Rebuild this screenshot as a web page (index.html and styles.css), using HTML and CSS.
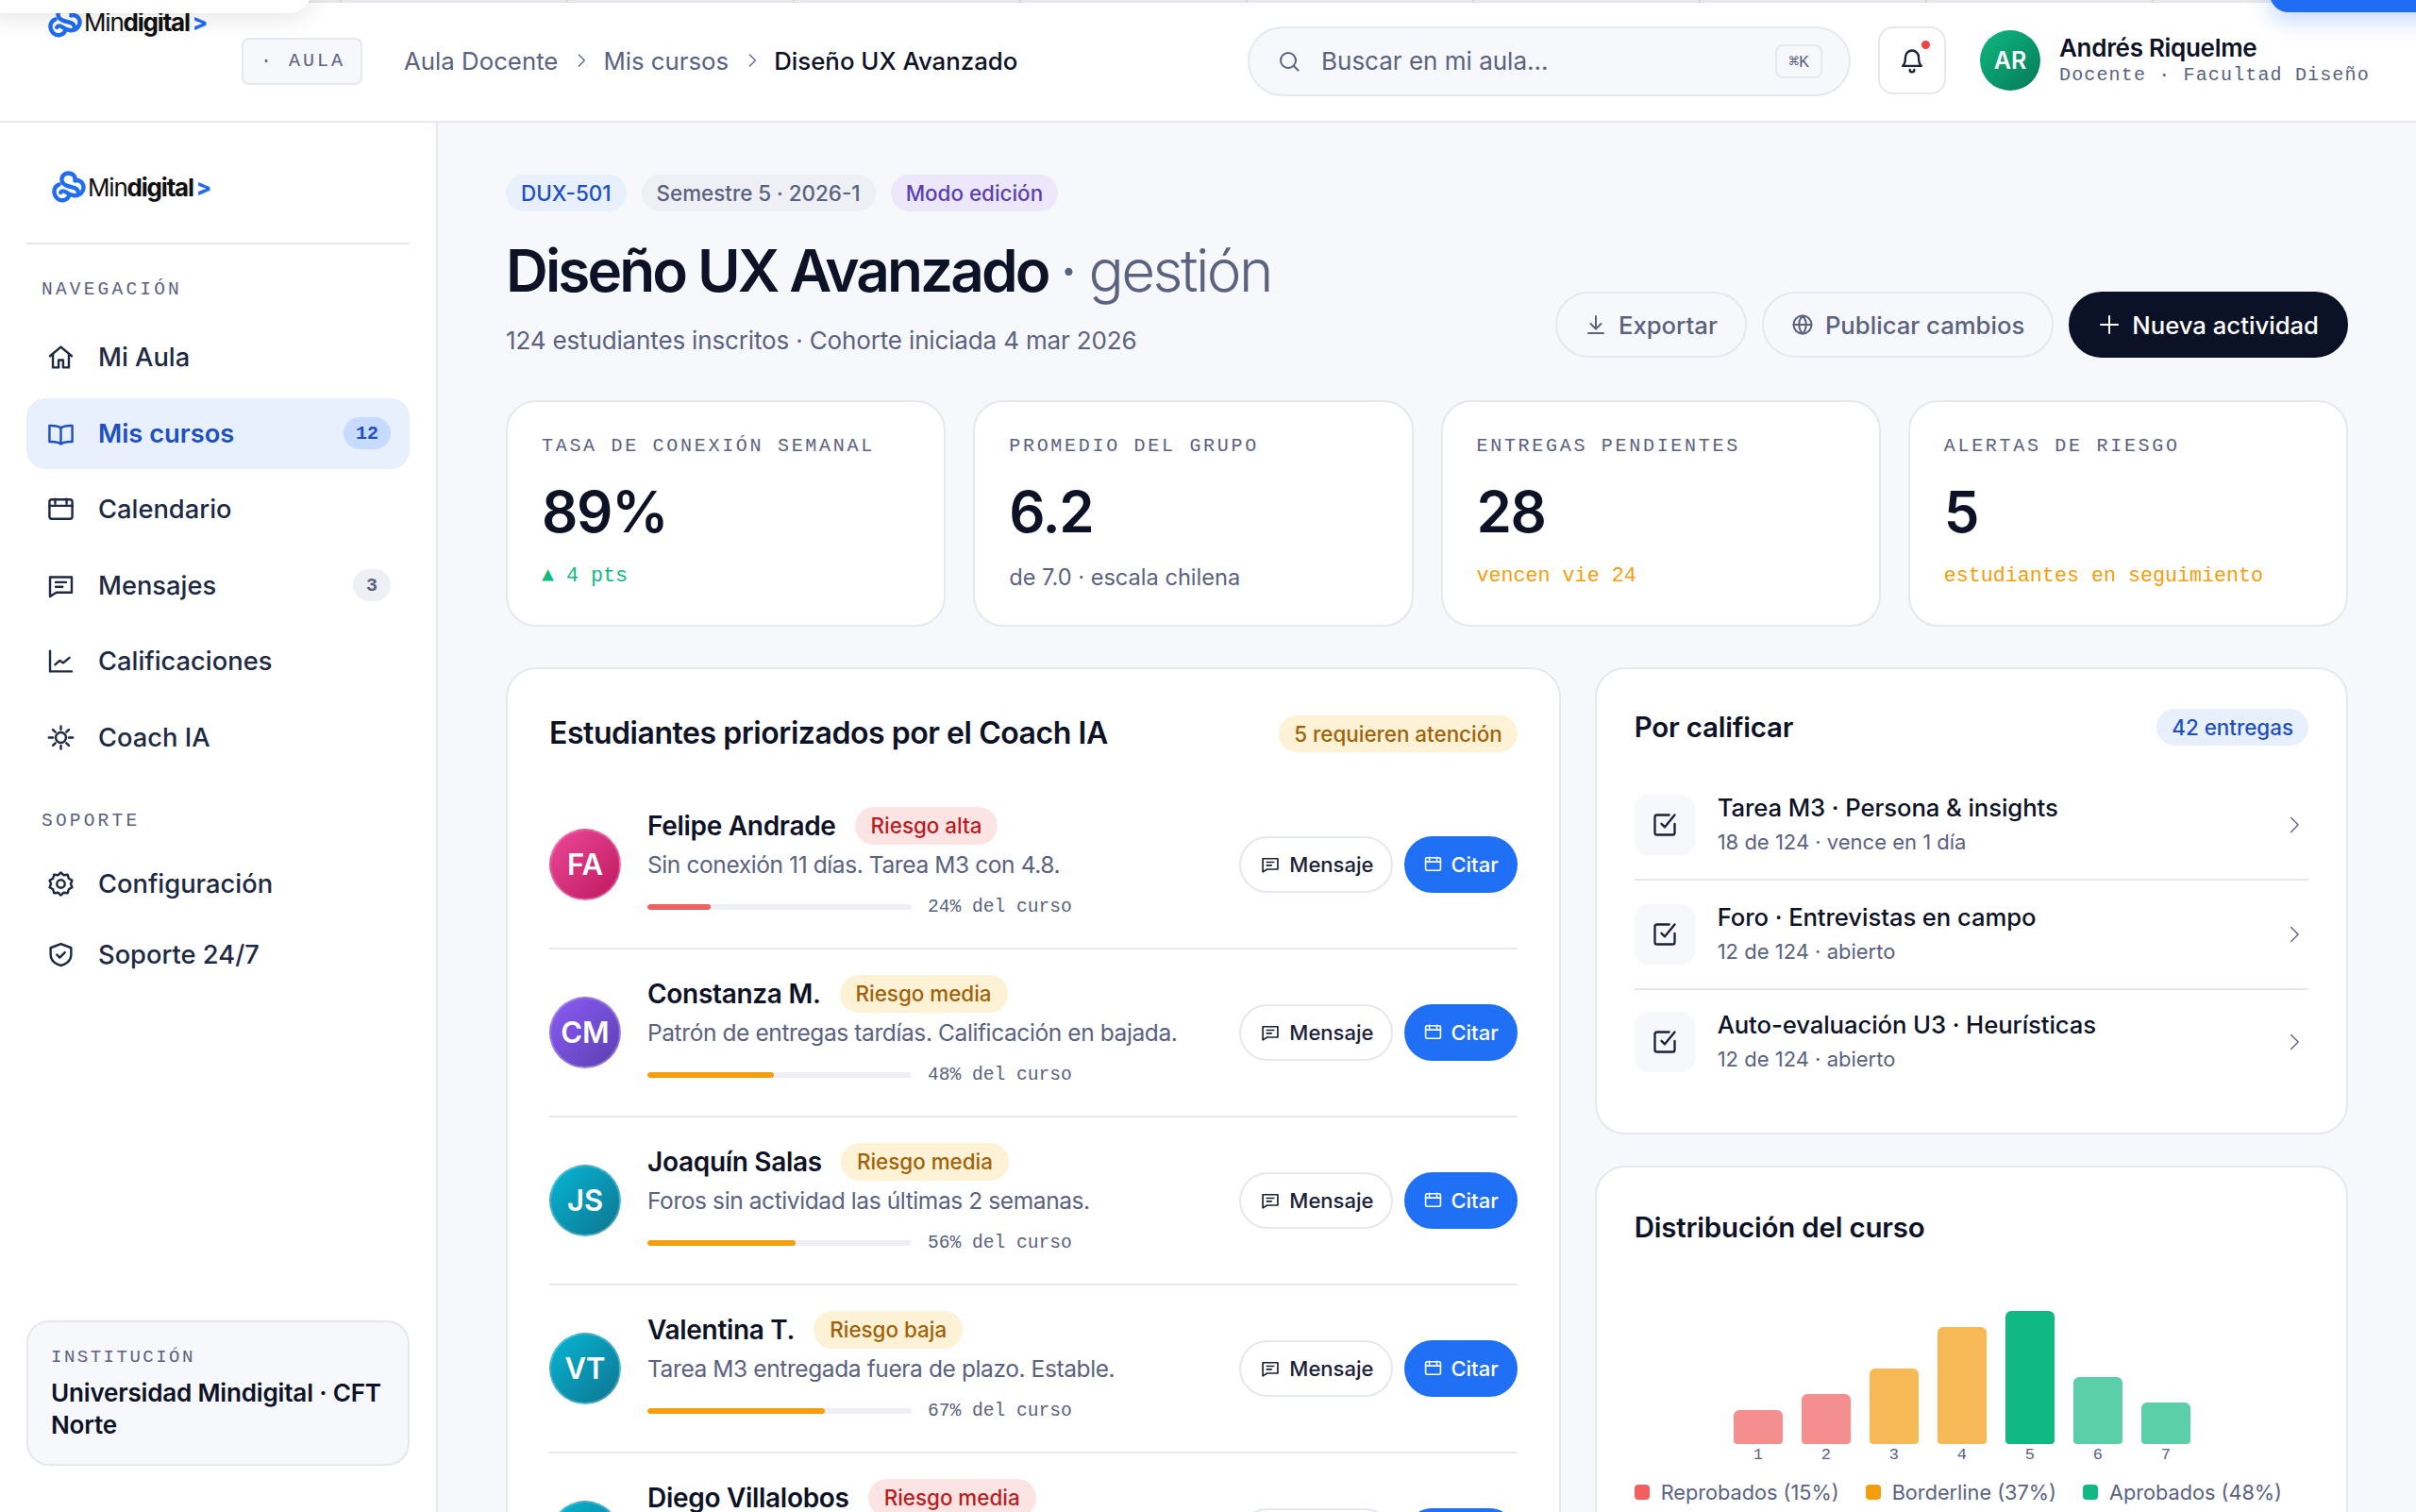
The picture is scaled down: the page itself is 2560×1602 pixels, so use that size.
FILE: index.html
```html
<!DOCTYPE html>
<html lang="es">
<head>
<meta charset="utf-8">
<title>Diseño UX Avanzado</title>
<link rel="stylesheet" href="styles.css">
</head>
<body>
<svg class="sprite" width="0" height="0">
  <defs>
    <symbol id="i-mark" viewBox="0 0 36 34"><g fill="none" stroke="currentColor" stroke-width="4.400" stroke-linecap="round"><path d="M24.500 10.500C25.500 6 22 2.500 17.500 2.500 13 2.500 10 6 10.500 10 11 14 14 15.500 18 16.500l6 1.700c3.500 1 4.800 4.600 3.200 7.300"/><path d="M7.500 14.500C4 16 2.200 19.500 2.500 23c.4 5 4.500 8.700 9 8.200 3.500-.4 5.700-2.500 6.700-5"/><path d="M26.500 10c4.500.2 7.300 4.200 7 8.200-.4 5-5 8.500-9.800 8-3-.3-6.500-2-8.500-3.500-2.500-1.800-5-1.700-6 .2"/></g></symbol>
    <symbol id="i-home" viewBox="0 0 24 24"><path d="M2.500 11 12 3l9.500 8"/><path d="M5 9.500V21h5v-6.500h4V21h5V9.500"/></symbol>
    <symbol id="i-book" viewBox="0 0 24 24"><path d="M12 7c-2-1.600-5-2.200-10-2v14c5-.2 8 .4 10 2 2-1.600 5-2.200 10-2V5c-5-.2-8 .4-10 2Z"/><path d="M12 7v14"/></symbol>
    <symbol id="i-cal" viewBox="0 0 24 24"><rect x="2" y="3.500" width="20" height="17" rx="2"/><path d="M2 9h20M7 3v4M17 3v4"/></symbol>
    <symbol id="i-msg" viewBox="0 0 24 24"><path d="M2.500 4.500h19V18H8l-5.500 3.500Z" stroke-linejoin="round"/><path d="M7.500 9h9M7.500 13h6"/></symbol>
    <symbol id="i-chart" viewBox="0 0 24 24"><path d="M2.500 3v18h19"/><path d="m7 15 4-3.500 3 2 5.500-4.500"/></symbol>
    <symbol id="i-sun" viewBox="0 0 24 24"><circle cx="12" cy="12" r="4.500"/><path d="M12 2v3M12 19v3M1.500 12h3.500M19 12h3.500M5 5l2.200 2.200M16.800 16.800 19 19M5 19l2.200-2.200M16.800 7.200 19 5"/></symbol>
    <symbol id="i-gear" viewBox="0 0 24 24"><path d="m12 2 2.500 2.400 3.500-.5.900 3.400 3 1.700-1.300 3 1.300 3-3 1.700-.9 3.400-3.500-.5L12 22l-2.500-2.400-3.500.5-.9-3.400-3-1.700 1.300-3-1.300-3 3-1.700.9-3.400 3.500.5Z"/><circle cx="12" cy="12" r="3.500"/></symbol>
    <symbol id="i-shield" viewBox="0 0 24 24"><path d="M12 2.500 21 6v6c0 5-4 8-9 9.500C7 20 3 17 3 12V6Z"/><path d="m8.500 12 2.500 2.500 4.500-4.500"/></symbol>
    <symbol id="i-search" viewBox="0 0 24 24"><circle cx="11" cy="11" r="8"/><path d="m17 17 4.500 4.500"/></symbol>
    <symbol id="i-bell" viewBox="0 0 24 24"><path d="M6 9a6 6 0 0 1 12 0c0 6 2.500 8 2.500 8h-17S6 15 6 9Z"/><path d="M10 20.500a2 2 0 0 0 4 0"/></symbol>
    <symbol id="i-down" viewBox="0 0 24 24"><path d="M12 3v13M6.500 11l5.500 5.500 5.500-5.500M4 21h16"/></symbol>
    <symbol id="i-globe" viewBox="0 0 24 24"><circle cx="12" cy="12" r="9.500"/><path d="M2.500 12h19M12 2.500c-5 5.500-5 13.500 0 19M12 2.500c5 5.500 5 13.500 0 19"/></symbol>
    <symbol id="i-plus" viewBox="0 0 24 24"><path d="M12 3v18M3 12h18"/></symbol>
    <symbol id="i-check" viewBox="0 0 24 24"><path d="M21 11v8a2 2 0 0 1-2 2H5a2 2 0 0 1-2-2V5a2 2 0 0 1 2-2h11"/><path d="m9 11 3 3 9-11"/></symbol>
    <symbol id="i-chev" viewBox="0 0 24 24"><path d="m8 3 9 9-9 9"/></symbol>
  </defs>
</svg>

<div class="app">
  <header class="topbar">
    <div class="logo logo-top">
      <svg class="logo-mark"><use href="#i-mark"/></svg>
      <span class="logo-text">Min<b>digital</b><i>&gt;</i></span>
    </div>
    <span class="aula-chip">· AULA</span>
    <nav class="crumbs">
      <span>Aula Docente</span>
      <svg class="ic crumb-sep"><use href="#i-chev"/></svg>
      <span>Mis cursos</span>
      <svg class="ic crumb-sep"><use href="#i-chev"/></svg>
      <span class="crumb-now">Diseño UX Avanzado</span>
    </nav>
    <div class="search">
      <svg class="ic search-ic"><use href="#i-search"/></svg>
      <span class="search-text">Buscar en mi aula...</span>
      <kbd class="kbd">⌘K</kbd>
    </div>
    <button class="bell"><svg class="ic bell-ic"><use href="#i-bell"/></svg><span class="bell-dot"></span></button>
    <div class="user">
      <span class="avatar-sm">AR</span>
      <div class="user-info">
        <div class="user-name">Andrés Riquelme</div>
        <div class="user-role">Docente · Facultad Diseño</div>
      </div>
    </div>
  </header>

  <aside class="sidebar">
    <div class="side-logo">
      <div class="logo">
        <svg class="logo-mark"><use href="#i-mark"/></svg>
        <span class="logo-text">Min<b>digital</b><i>&gt;</i></span>
      </div>
    </div>
    <div class="nav-label">NAVEGACIÓN</div>
    <nav class="nav">
      <a class="nav-item"><svg class="ic nav-ic"><use href="#i-home"/></svg>Mi Aula</a>
      <a class="nav-item is-active"><svg class="ic nav-ic"><use href="#i-book"/></svg>Mis cursos<span class="nav-badge nav-badge-blue">12</span></a>
      <a class="nav-item"><svg class="ic nav-ic"><use href="#i-cal"/></svg>Calendario</a>
      <a class="nav-item"><svg class="ic nav-ic"><use href="#i-msg"/></svg>Mensajes<span class="nav-badge">3</span></a>
      <a class="nav-item"><svg class="ic nav-ic"><use href="#i-chart"/></svg>Calificaciones</a>
      <a class="nav-item"><svg class="ic nav-ic"><use href="#i-sun"/></svg>Coach IA</a>
    </nav>
    <div class="nav-label nav-label-2">SOPORTE</div>
    <nav class="nav nav-tight">
      <a class="nav-item"><svg class="ic nav-ic"><use href="#i-gear"/></svg>Configuración</a>
      <a class="nav-item"><svg class="ic nav-ic"><use href="#i-shield"/></svg>Soporte 24/7</a>
    </nav>
    <div class="inst">
      <div class="inst-label">INSTITUCIÓN</div>
      <div class="inst-name">Universidad Mindigital · CFT Norte</div>
    </div>
  </aside>

  <main class="main">
    <section class="page-head">
      <div>
        <div class="chips">
          <span class="chip chip-blue">DUX-501</span>
          <span class="chip chip-grey">Semestre 5 · 2026-1</span>
          <span class="chip chip-violet">Modo edición</span>
        </div>
        <h1 class="title">Diseño UX Avanzado <span class="title-light"><span class="title-dot">·</span> gestión</span></h1>
        <p class="subtitle">124 estudiantes inscritos · Cohorte iniciada 4 mar 2026</p>
      </div>
      <div class="head-actions">
        <button class="btn"><svg class="ic btn-ic"><use href="#i-down"/></svg>Exportar</button>
        <button class="btn"><svg class="ic btn-ic"><use href="#i-globe"/></svg>Publicar cambios</button>
        <button class="btn btn-dark"><svg class="ic btn-ic"><use href="#i-plus"/></svg>Nueva actividad</button>
      </div>
    </section>

    <section class="kpis">
      <article class="kpi">
        <div class="kpi-label">TASA DE CONEXIÓN SEMANAL</div>
        <div class="kpi-value">89%</div>
        <div class="kpi-note note-green">▲ 4 pts</div>
      </article>
      <article class="kpi">
        <div class="kpi-label">PROMEDIO DEL GRUPO</div>
        <div class="kpi-value">6.2</div>
        <div class="kpi-note note-sans">de 7.0 · escala chilena</div>
      </article>
      <article class="kpi">
        <div class="kpi-label">ENTREGAS PENDIENTES</div>
        <div class="kpi-value">28</div>
        <div class="kpi-note note-amber">vencen vie 24</div>
      </article>
      <article class="kpi">
        <div class="kpi-label">ALERTAS DE RIESGO</div>
        <div class="kpi-value">5</div>
        <div class="kpi-note note-amber">estudiantes en seguimiento</div>
      </article>
    </section>

    <section class="columns">
      <article class="panel panel-students">
        <div class="panel-head students-head">
          <h2 class="panel-title">Estudiantes priorizados por el Coach IA</h2>
          <span class="chip chip-amber">5 requieren atención</span>
        </div>

        <div class="student">
          <span class="avatar av-pink">FA</span>
          <div class="student-body">
            <div class="student-top"><span class="student-name">Felipe Andrade</span><span class="risk risk-red">Riesgo alta</span></div>
            <div class="student-desc">Sin conexión 11 días. Tarea M3 con 4.8.</div>
            <div class="progress-row"><div class="track"><div class="fill fill-red" style="width:24%"></div></div><span class="progress-text">24% del curso</span></div>
          </div>
          <div class="student-actions">
            <button class="mini"><svg class="ic mini-ic"><use href="#i-msg"/></svg>Mensaje</button>
            <button class="mini mini-blue"><svg class="ic mini-ic"><use href="#i-cal"/></svg>Citar</button>
          </div>
        </div>

        <div class="student">
          <span class="avatar av-violet">CM</span>
          <div class="student-body">
            <div class="student-top"><span class="student-name">Constanza M.</span><span class="risk risk-amber">Riesgo media</span></div>
            <div class="student-desc">Patrón de entregas tardías. Calificación en bajada.</div>
            <div class="progress-row"><div class="track"><div class="fill fill-amber" style="width:48%"></div></div><span class="progress-text">48% del curso</span></div>
          </div>
          <div class="student-actions">
            <button class="mini"><svg class="ic mini-ic"><use href="#i-msg"/></svg>Mensaje</button>
            <button class="mini mini-blue"><svg class="ic mini-ic"><use href="#i-cal"/></svg>Citar</button>
          </div>
        </div>

        <div class="student">
          <span class="avatar av-teal">JS</span>
          <div class="student-body">
            <div class="student-top"><span class="student-name">Joaquín Salas</span><span class="risk risk-amber">Riesgo media</span></div>
            <div class="student-desc">Foros sin actividad las últimas 2 semanas.</div>
            <div class="progress-row"><div class="track"><div class="fill fill-amber" style="width:56%"></div></div><span class="progress-text">56% del curso</span></div>
          </div>
          <div class="student-actions">
            <button class="mini"><svg class="ic mini-ic"><use href="#i-msg"/></svg>Mensaje</button>
            <button class="mini mini-blue"><svg class="ic mini-ic"><use href="#i-cal"/></svg>Citar</button>
          </div>
        </div>

        <div class="student">
          <span class="avatar av-teal">VT</span>
          <div class="student-body">
            <div class="student-top"><span class="student-name">Valentina T.</span><span class="risk risk-amber">Riesgo baja</span></div>
            <div class="student-desc">Tarea M3 entregada fuera de plazo. Estable.</div>
            <div class="progress-row"><div class="track"><div class="fill fill-amber" style="width:67%"></div></div><span class="progress-text">67% del curso</span></div>
          </div>
          <div class="student-actions">
            <button class="mini"><svg class="ic mini-ic"><use href="#i-msg"/></svg>Mensaje</button>
            <button class="mini mini-blue"><svg class="ic mini-ic"><use href="#i-cal"/></svg>Citar</button>
          </div>
        </div>

        <div class="student">
          <span class="avatar av-teal">DV</span>
          <div class="student-body">
            <div class="student-top"><span class="student-name">Diego Villalobos</span><span class="risk risk-red">Riesgo media</span></div>
            <div class="student-desc">Sin entregas en las últimas semanas.</div>
            <div class="progress-row"><div class="track"><div class="fill fill-amber" style="width:50%"></div></div><span class="progress-text">50% del curso</span></div>
          </div>
          <div class="student-actions">
            <button class="mini"><svg class="ic mini-ic"><use href="#i-msg"/></svg>Mensaje</button>
            <button class="mini mini-blue"><svg class="ic mini-ic"><use href="#i-cal"/></svg>Citar</button>
          </div>
        </div>
      </article>

      <div class="side-col">
        <article class="panel panel-grade">
          <div class="panel-head grade-head">
            <h2 class="panel-title panel-title-sm">Por calificar</h2>
            <span class="chip chip-blue">42 entregas</span>
          </div>
          <div class="task">
            <span class="task-box"><svg class="ic task-ic"><use href="#i-check"/></svg></span>
            <div class="task-body"><div class="task-title">Tarea M3 · Persona &amp; insights</div><div class="task-sub">18 de 124 · vence en 1 día</div></div>
            <svg class="ic task-chev"><use href="#i-chev"/></svg>
          </div>
          <div class="task">
            <span class="task-box"><svg class="ic task-ic"><use href="#i-check"/></svg></span>
            <div class="task-body"><div class="task-title">Foro · Entrevistas en campo</div><div class="task-sub">12 de 124 · abierto</div></div>
            <svg class="ic task-chev"><use href="#i-chev"/></svg>
          </div>
          <div class="task">
            <span class="task-box"><svg class="ic task-ic"><use href="#i-check"/></svg></span>
            <div class="task-body"><div class="task-title">Auto-evaluación U3 · Heurísticas</div><div class="task-sub">12 de 124 · abierto</div></div>
            <svg class="ic task-chev"><use href="#i-chev"/></svg>
          </div>
        </article>

        <article class="panel panel-dist">
          <h2 class="panel-title panel-title-sm">Distribución del curso</h2>
          <div class="chart">
            <div class="bar-col"><div class="bar bar-red" style="height:36px"></div><span class="bar-label">1</span></div>
            <div class="bar-col"><div class="bar bar-red" style="height:53px"></div><span class="bar-label">2</span></div>
            <div class="bar-col"><div class="bar bar-amber" style="height:80px"></div><span class="bar-label">3</span></div>
            <div class="bar-col"><div class="bar bar-amber" style="height:124px"></div><span class="bar-label">4</span></div>
            <div class="bar-col"><div class="bar bar-green" style="height:141px"></div><span class="bar-label">5</span></div>
            <div class="bar-col"><div class="bar bar-mint" style="height:71px"></div><span class="bar-label">6</span></div>
            <div class="bar-col"><div class="bar bar-mint" style="height:44px"></div><span class="bar-label">7</span></div>
          </div>
          <div class="legend">
            <span class="legend-item"><i class="swatch sw-red"></i>Reprobados (15%)</span>
            <span class="legend-item"><i class="swatch sw-amber"></i>Borderline (37%)</span>
            <span class="legend-item"><i class="swatch sw-green"></i>Aprobados (48%)</span>
          </div>
        </article>
      </div>
    </section>
  </main>
</div>

<div class="strip"></div>
<div class="float-white"></div>
<div class="float-blue"></div>
</body>
</html>
```
FILE: styles.css
```css
* { box-sizing: border-box; }
html, body { margin: 0; height: 1602px; overflow: hidden; }
body {
  font-family: "Inter", "Liberation Sans", sans-serif;
  color: #0d1226;
  background: #f6f8fb;
  position: relative;
}
button { font-family: inherit; }
.sprite { position: absolute; }
.ic {
  fill: none;
  stroke: currentColor;
  stroke-width: 2;
  stroke-linecap: round;
  stroke-linejoin: round;
  flex: none;
}

.app {
  display: grid;
  grid-template-columns: 464px minmax(0, 1fr);
  grid-template-rows: 130px 1472px;
  height: 1602px;
}

/* overlays at the top of the frame */
.strip {
  position: absolute; left: 0; top: 0; width: 100%; height: 3px;
  background: repeating-linear-gradient(90deg, #e7e8ec 0 120px, #d9dae0 120px 122px, #e7e8ec 122px 240px);
}
.float-white {
  position: absolute; left: -20px; top: -20px; width: 350px; height: 34px;
  background: #fff;
  border-radius: 0 0 24px 24px;
  box-shadow: 0 6px 24px rgba(15, 23, 42, .10);
}
.float-blue {
  position: absolute; left: 2405px; top: -20px; width: 200px; height: 33px;
  background: #1f6cf5;
  border-radius: 0 0 20px 20px;
  box-shadow: 0 8px 24px rgba(31, 108, 245, .28);
}

/* top bar */
.topbar {
  grid-column: 1 / 3;
  display: flex;
  align-items: center;
  background: #fff;
  border-bottom: 2px solid #e6e8f0;
  padding: 0 0 0 51px;
}
.logo { display: flex; align-items: center; gap: 2px; height: 34px; }
.logo-top { align-self: flex-start; margin-top: 6px; width: 205px; }
.logo-mark { width: 36px; height: 34px; color: #1f6cf5; flex: none; }
.logo-text { font-family: "Inter", sans-serif; font-size: 26px; font-weight: 400; letter-spacing: -1.200px; color: #111; display: flex; align-items: center; }
.logo-text b { font-weight: 700; }
.logo-text i { font-style: normal; font-weight: 800; font-size: 24px; color: #1f6cf5; margin-left: 3px; letter-spacing: 0; }

.aula-chip {
  width: 128px; height: 50px;
  margin-top: 1px;
  display: flex; align-items: center;
  padding-left: 18px;
  white-space: pre;
  font-family: "Liberation Mono", monospace;
  font-size: 20px;
  letter-spacing: 3px;
  color: #5a6280;
  background: #f6f8fb;
  border: 2px solid #e6e8f0;
  border-radius: 8px;
}
.crumbs { display: flex; align-items: center; margin-left: 44px; font-size: 25.800px; color: #5a6280; width: 894px; }
.crumb-sep { width: 16px; height: 16px; margin: 0 15px 0 17px; stroke-width: 1.800; }
.crumb-now { color: #0d1226; font-weight: 500; }

.search {
  width: 639px; height: 74px;
  margin-top: 1px;
  display: flex; align-items: center;
  padding: 0 28px 0 30px;
  background: #f6f8fb;
  border: 2px solid #e6e8f0;
  border-radius: 37px;
  color: #5a6280;
}
.search-ic { width: 24px; height: 24px; margin-right: 22px; }
.search-text { font-size: 26px; flex: 1; }
.kbd {
  width: 50px; height: 36px;
  display: flex; align-items: center; justify-content: center;
  font-family: "Liberation Mono", monospace;
  font-size: 18px;
  color: #5a6280;
  background: #f6f8fb;
  border: 2px solid #e6e8f0;
  border-radius: 8px;
}
.bell {
  position: relative;
  width: 72px; height: 72px;
  margin-left: 29px;
  display: flex; align-items: center; justify-content: center;
  background: #fff;
  border: 2px solid #e6e8f0;
  border-radius: 16px;
  color: #1a2138;
  padding: 0;
}
.bell-ic { width: 28px; height: 28px; }
.bell-dot {
  position: absolute; right: 15px; top: 13px;
  width: 9px; height: 9px; border-radius: 50%;
  background: #ef4444;
}
.user { display: flex; align-items: center; margin-left: 36px; gap: 20px; }
.avatar-sm {
  width: 64px; height: 64px; border-radius: 50%;
  display: flex; align-items: center; justify-content: center;
  background: linear-gradient(135deg, #10b981, #047857);
  color: #fff; font-size: 25px; font-weight: 600;
}
.user-name { font-size: 26px; font-weight: 600; line-height: 32px; letter-spacing: -.3px; }
.user-role {
  font-family: "Liberation Mono", monospace;
  font-size: 20px; letter-spacing: 1.150px; line-height: 26px;
  color: #5a6280;
  white-space: nowrap;
}

/* sidebar */
.sidebar {
  display: flex; flex-direction: column;
  background: #fff;
  border-right: 2px solid #e6e8f0;
  padding: 0 28px 49px;
}
.side-logo {
  height: 129px;
  display: flex; align-items: center;
  padding-left: 27px;
  padding-top: 9px;
  border-bottom: 2px solid #e6e8f0;
  flex: none;
}
.nav-label {
  font-family: "Liberation Mono", monospace;
  font-size: 19.500px; letter-spacing: 3.200px;
  color: #5a6280;
  padding-left: 16px;
  margin-top: 36px;
  line-height: 24px;
}
.nav-label-2 { margin-top: 39px; }
.nav { display: flex; flex-direction: column; gap: 5.600px; margin-top: 22px; }
.nav-tight { gap: 0; margin-top: 17px; }
.nav-item {
  height: 75px;
  display: flex; align-items: center;
  padding: 0 20px 0 22px;
  font-size: 27.300px; font-weight: 500;
  color: #1e2a44;
  border-radius: 20px;
}
.nav-ic { width: 29px; height: 29px; margin-right: 25px; }
.nav-item.is-active { background: #e8f0fe; color: #1d4fc4; font-weight: 600; }
.nav-badge {
  margin-left: auto;
  min-width: 40px; height: 34px; padding: 0 13px;
  display: flex; align-items: center; justify-content: center;
  border-radius: 17px;
  background: #eef0f5;
  color: #5a6280;
  font-family: "Liberation Mono", monospace;
  font-size: 20px; font-weight: 700;
}
.nav-badge-blue { background: #c7dbfe; color: #1d4fc4; }
.inst {
  margin-top: auto;
  padding: 25px 14px 24px 24px;
  background: #f6f8fb;
  border: 2px solid #e6e8f0;
  border-radius: 24px;
}
.inst-label {
  font-family: "Liberation Mono", monospace;
  font-size: 19px; letter-spacing: 2.500px; line-height: 24px;
  color: #5a6280;
}
.inst-name { margin-top: 9px; font-size: 26.100px; font-weight: 600; line-height: 34px; letter-spacing: -.2px; }

/* main */
.main { padding: 55px 72px 0; background: #f6f8fb; overflow: hidden; min-width: 0; }
.page-head { display: flex; justify-content: space-between; align-items: flex-end; }
.chips { display: flex; gap: 16px; }
.chip {
  height: 39px; padding: 0 16px;
  display: inline-flex; align-items: center;
  border-radius: 20px;
  font-size: 22.400px; font-weight: 500;
  white-space: nowrap;
}
.chip-blue { background: #e8f0fe; color: #1d4fc4; }
.chip-grey { background: #eef0f5; color: #5a6280; }
.chip-violet { background: #ede7fb; color: #5b3fb0; }
.chip-amber { background: #fdf2d6; color: #a16207; }
.title { margin: 27px 0 0; font-size: 62px; font-weight: 600; line-height: 72px; letter-spacing: -2.870px; white-space: nowrap; }
.title-light { font-weight: 300; color: #5a6280; letter-spacing: -2.600px; }
.title-dot { font-weight: 400; }
.subtitle { margin: 18px 0 0; font-size: 26px; line-height: 40px; color: #5a6280; letter-spacing: -.15px; }
.head-actions { display: flex; gap: 16px; margin-bottom: 2px; }
.btn {
  height: 70px; padding: 0 29px;
  display: flex; align-items: center; gap: 12px;
  font-size: 25.700px; font-weight: 500;
  color: #5a6280;
  background: #f6f8fb;
  border: 2px solid #e6e8f0;
  border-radius: 35px;
  white-space: nowrap;
}
.btn-dark { background: #0b1126; border-color: #0b1126; color: #fff; }
.btn-ic { width: 24px; height: 24px; }

.kpis { display: grid; grid-template-columns: repeat(4, minmax(0, 1fr)); gap: 29px; margin-top: 43px; }
.kpi {
  height: 240px;
  padding: 0 36px;
  background: #fff;
  border: 2px solid #e6e8f0;
  border-radius: 32px;
  display: flex; flex-direction: column;
}
.kpi-label {
  margin-top: 33.500px; line-height: 26px;
  font-family: "Liberation Mono", monospace;
  font-size: 20px; letter-spacing: 2.700px;
  color: #5a6280;
  white-space: nowrap;
}
.kpi-value { margin-top: 18px; font-size: 60px; font-weight: 600; line-height: 76px; letter-spacing: -1.300px; }
.kpi-note { margin-top: 16.500px; line-height: 30px; font-family: "Liberation Mono", monospace; font-size: 21.700px; }
.note-green { color: #10b981; }
.note-amber { color: #f59e0b; }
.kpi-note.note-sans { margin-top: 17px; font-family: "Inter", sans-serif; font-size: 23.600px; color: #5a6280; }

.columns { display: grid; grid-template-columns: minmax(0, 1.4fr) minmax(0, 1fr); gap: 36px; margin-top: 43px; align-items: start; }
.panel { background: #fff; border: 2px solid #e6e8f0; border-radius: 32px; }
.panel-head { display: flex; align-items: center; justify-content: space-between; }
.panel-title { margin: 0; font-size: 32px; font-weight: 600; line-height: 44px; letter-spacing: -.45px; white-space: nowrap; }
.panel-title-sm { font-size: 29.500px; letter-spacing: -.2px; }

.panel-students { padding: 46px 44px 0; }
.students-head { margin-bottom: 28.500px; }
.student {
  height: 178px;
  display: flex; align-items: center;
  border-bottom: 2px solid #e6e8f0;
}
.avatar {
  width: 76px; height: 76px; border-radius: 50%;
  display: flex; align-items: center; justify-content: center;
  flex: none;
  color: #fff; font-size: 31px; font-weight: 600;
  margin-right: 28px;
  border: 2px solid rgba(255, 255, 255, .25);
}
.av-pink { background: linear-gradient(135deg, #ec4899, #be185d); }
.av-violet { background: linear-gradient(135deg, #8b5cf6, #5b3fb0); }
.av-teal { background: linear-gradient(135deg, #06b6d4, #0e7490); }
.student-body { flex: 1; min-width: 0; padding-top: 3px; }
.student-top { display: flex; align-items: center; gap: 20px; height: 40px; }
.student-name { font-size: 28px; font-weight: 600; letter-spacing: -.3px; white-space: nowrap; }
.risk {
  height: 40px; padding: 0 17px;
  display: inline-flex; align-items: center;
  border-radius: 20px;
  font-size: 22.400px; font-weight: 500;
  white-space: nowrap;
}
.risk-red { background: #fde4e4; color: #b91c1c; }
.risk-amber { background: #fdf2d6; color: #a16207; }
.student-desc { margin-top: 1.500px; font-size: 24.500px; line-height: 40px; letter-spacing: -.4px; color: #5a6280; white-space: nowrap; }
.progress-row { display: flex; align-items: center; gap: 17px; margin-top: 7px; height: 36px; }
.track { width: 280px; height: 6px; background: #eef0f5; border-radius: 3px; overflow: hidden; }
.fill { height: 100%; border-radius: 3px; }
.fill-red { background: #ef6060; }
.fill-amber { background: #f59e0b; }
.progress-text { font-family: "Liberation Mono", monospace; font-size: 19.600px; color: #5a6280; white-space: nowrap; }
.student-actions { display: flex; gap: 12px; flex: none; }
.mini {
  height: 60px; padding: 0 19px 0 21px;
  display: flex; align-items: center; gap: 10px;
  font-size: 22px; font-weight: 500;
  color: #1a2138;
  background: #fff;
  border: 2px solid #e6e8f0;
  border-radius: 30px;
  white-space: nowrap;
}
.mini-blue { background: #2070f5; border-color: #2070f5; color: #fff; padding: 0 18px 0 19px; gap: 9px; }
.mini-ic { width: 20px; height: 20px; }
.mini-blue .mini-ic { width: 19px; height: 19px; }

.side-col { display: flex; flex-direction: column; gap: 33px; }
.panel-grade { height: 495px; padding: 39px 40px 0 40px; }
.grade-head { margin-bottom: 24.500px; }
.task {
  height: 116px;
  display: flex; align-items: center;
  border-bottom: 2px solid #e6e8f0;
}
.task:last-child { border-bottom: 0; height: 110px; }
.task-box {
  width: 64px; height: 64px;
  display: flex; align-items: center; justify-content: center;
  background: #f6f8fb;
  border-radius: 14px;
  margin-right: 24px;
  flex: none;
  color: #1a2138;
}
.task-ic { width: 28px; height: 28px; }
.task-body { flex: 1; min-width: 0; }
.task-title { font-size: 25.700px; font-weight: 500; line-height: 38px; letter-spacing: -.1px; }
.task-sub { margin-top: -1px; font-size: 22px; line-height: 36px; color: #5a6280; }
.task-chev { width: 20px; height: 22px; margin-right: 5px; color: #5a6280; stroke-width: 1.600; }

.panel-dist { height: 420px; padding: 41px 40px 0 40px; }
.chart { display: flex; justify-content: center; gap: 20px; align-items: flex-end; height: 181px; margin-top: 48px; padding-right: 20px; }
.bar-col { width: 52px; display: flex; flex-direction: column; align-items: center; }
.bar { width: 52px; border-radius: 6px 6px 4px 4px; }
.bar-red { background: #f58f8f; }
.bar-amber { background: #f6b955; }
.bar-green { background: #10b981; }
.bar-mint { background: #5bcfa8; }
.bar-label { height: 21px; line-height: 23px; font-family: "Liberation Mono", monospace; font-size: 17px; color: #5a6280; }
.legend { display: flex; gap: 28px; margin-top: 15px; }
.legend-item { display: flex; align-items: center; font-size: 21.700px; color: #5a6280; white-space: nowrap; line-height: 30px; }
.swatch { width: 16px; height: 16px; border-radius: 4px; margin-right: 12px; }
.sw-red { background: #f25f5f; }
.sw-amber { background: #f59e0b; }
.sw-green { background: #10b981; }
```
